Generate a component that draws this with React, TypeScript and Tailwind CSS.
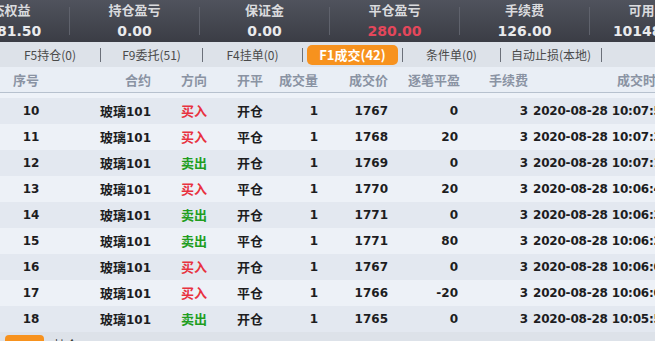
import React from "react"

// Summary figures shown in the dark account bar
const stats = [
  { label: "动态权益", value: "10381.50" },
  { label: "持仓盈亏", value: "0.00" },
  { label: "保证金", value: "0.00" },
  { label: "平仓盈亏", value: "280.00", red: true },
  { label: "手续费", value: "126.00" },
  { label: "可用资金", value: "101481.50" },
]

const tabs = [
  { label: "F5持仓(0)", w: "w-[100px]" },
  { label: "F9委托(51)", w: "w-[101px]" },
  { label: "F4挂单(0)", w: "w-[99px]" },
]

const tabsRight = [
  { label: "条件单(0)", w: "w-[97px]" },
  { label: "自动止损(本地)", w: "w-[100px]" },
]

// Trade rows: [seq, side, openClose, price, pnl, time]
const trades = [
  ["10", "买入", "开仓", "1767", "0", "10:07:52"],
  ["11", "买入", "平仓", "1768", "20", "10:07:31"],
  ["12", "卖出", "开仓", "1769", "0", "10:07:10"],
  ["13", "买入", "平仓", "1770", "20", "10:06:48"],
  ["14", "卖出", "开仓", "1771", "0", "10:06:33"],
  ["15", "卖出", "平仓", "1771", "80", "10:06:21"],
  ["16", "买入", "开仓", "1767", "0", "10:06:05"],
  ["17", "买入", "平仓", "1766", "-20", "10:06:01"],
  ["18", "卖出", "开仓", "1765", "0", "10:05:57"],
]

const cjk = "font-['Noto_Sans_CJK_SC',sans-serif]"
const num = "font-['DejaVu_Sans','Noto_Sans_CJK_SC',sans-serif]"

function Sep() {
  return <div className="h-[14px] w-px bg-[#6b7079]" />
}

export default function App() {
  return (
    <div className="h-[341px] w-[655px] overflow-hidden bg-[#eef2f8]">
      {/* Account summary bar */}
      <div className="flex h-[42px] bg-gradient-to-b from-[#50535d] to-[#3b3d45]">
        <div className="-ml-[60px] flex shrink-0 items-center">
          {stats.map((s, i) => (
            <React.Fragment key={s.label}>
              {i > 0 && <div className="h-[28px] w-px bg-[#5f626c]" />}
              <div className="flex h-[42px] w-[129px] shrink-0 flex-col items-center">
                <div className={`${cjk} mt-[1px] h-[18px] text-[13px] leading-[18px] font-bold text-[#dadbde]`}>
                  {s.label}
                </div>
                <div
                  className={`${num} mt-[3px] text-[14px] leading-[18px] font-bold ${
                    s.red ? "text-[#e4475b]" : "text-[#e9eaec]"
                  }`}
                >
                  {s.value}
                </div>
              </div>
            </React.Fragment>
          ))}
        </div>
      </div>

      {/* Tab bar */}
      <div className={`${cjk} flex h-[25px] items-center bg-[#dde2e9] text-[12px] text-[#4a4a4a]`}>
        {tabs.map((t) => (
          <React.Fragment key={t.label}>
            <div className={`${t.w} text-center`}>{t.label}</div>
            <Sep />
          </React.Fragment>
        ))}
        <div className="mx-[4px] flex h-[20px] w-[91px] items-center justify-center rounded-[5px] bg-[#f7921e] text-[13px] font-bold text-white">
          F1成交(42)
        </div>
        <Sep />
        {tabsRight.map((t) => (
          <React.Fragment key={t.label}>
            <div className={`${t.w} text-center`}>{t.label}</div>
            <Sep />
          </React.Fragment>
        ))}
      </div>

      {/* Column header */}
      <div
        className={`${cjk} flex h-[26px] items-center border-b border-[#b7c1ce] bg-[#e9eef5] text-[13px] font-bold whitespace-nowrap text-[#8a93a3]`}
      >
        <div className="w-[62px] shrink-0 pl-[13px]">序号</div>
        <div className="w-[94px] shrink-0 pr-[5px] text-right">合约</div>
        <div className="w-[76px] shrink-0 text-center">方向</div>
        <div className="w-[36px] shrink-0 text-center">开平</div>
        <div className="w-[52px] shrink-0 pr-[2px] text-right">成交量</div>
        <div className="w-[70px] shrink-0 pr-[2px] text-right">成交价</div>
        <div className="w-[70px] shrink-0 text-right">逐笔平盈</div>
        <div className="w-[70px] shrink-0 pr-[2px] text-right">手续费</div>
        <div className="w-[150px] shrink-0 pl-[87px]">成交时间</div>
      </div>

      {/* Trade rows */}
      <div className="pt-[5px]">
        {trades.map((r, i) => (
          <div
            key={r[0]}
            className={`${num} flex h-[26px] items-center text-[12px] font-bold whitespace-nowrap text-[#1d1d1f] ${
              i % 2 === 0 ? "bg-[#e3e8f0]" : "bg-[#edf1f7]"
            }`}
          >
            <div className="w-[62px] shrink-0 text-center">{r[0]}</div>
            <div className="w-[94px] shrink-0 pr-[5px] text-right">
              <span className={`${cjk} text-[13px]`}>玻璃</span>101
            </div>
            <div
              className={`${cjk} w-[76px] shrink-0 text-center text-[13px] ${
                r[1] === "买入" ? "text-[#e8323f]" : "text-[#1f9e1f]"
              }`}
            >
              {r[1]}
            </div>
            <div className={`${cjk} w-[36px] shrink-0 text-center text-[13px]`}>{r[2]}</div>
            <div className="w-[52px] shrink-0 pr-[2px] text-right">1</div>
            <div className="w-[70px] shrink-0 pr-[2px] text-right">{r[3]}</div>
            <div className="w-[70px] shrink-0 pr-[2px] text-right">{r[4]}</div>
            <div className="w-[70px] shrink-0 pr-[2px] text-right">3</div>
            <div className="shrink-0 pl-[3px] tracking-[-0.2px]">2020-08-28 {r[5]}</div>
          </div>
        ))}
      </div>

      {/* Bottom tab strip (cut off) */}
      <div className={`${cjk} flex h-[25px] items-start bg-[#dde2e9] pt-[3px] text-[12px]`}>
        <div className="ml-[5px] h-[20px] w-[39px] rounded-[4px] bg-[#f7921e]" />
        <div className="ml-[10px] leading-[20px] text-[#333]">持仓</div>
      </div>
    </div>
  )
}
